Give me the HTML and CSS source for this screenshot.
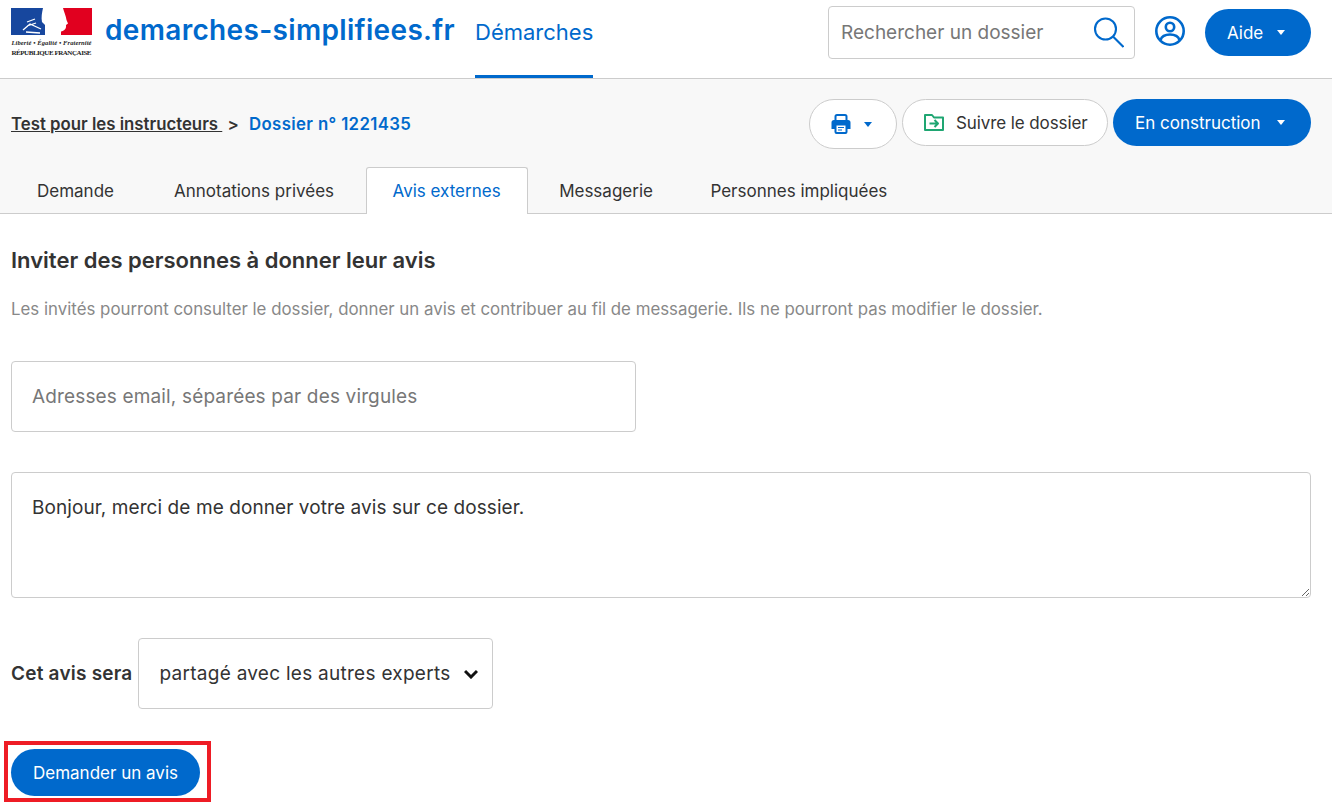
FILE: index.html
```html
<!DOCTYPE html>
<html lang="fr">
<head>
<meta charset="utf-8">
<title>Avis externes</title>
<link rel="stylesheet" href="styles.css">
</head>
<body>
<header class="topbar">
  <div class="brand">
    <svg class="logo" width="82" height="50" viewBox="0 0 82 50">
      <rect x="0" y="0" width="34" height="27" fill="#17479e"/>
      <rect x="50" y="0" width="31" height="27" fill="#e1001f"/>
      <path d="M32 0 H52 C53 4 55 8 55.500 12 L57 15.500 L55 17 C55.500 21 53 23 50 23.500 L47 27 H42 C40 22 36 19 31 14 C30 9 31 5 32 0 Z" fill="#fff"/>
      <path d="M16 14 L24 11 M12 22 L19 16 L30 21 M15 24 L29 25 M16 18 L25 15" stroke="#fff" stroke-width="1.3" fill="none"/>
      <text x="0.5" y="37" class="motto" textLength="80">Liberté • Égalité • Fraternité</text>
      <text x="0.5" y="47" class="rf" textLength="80">RÉPUBLIQUE FRANÇAISE</text>
    </svg>
    <span class="site-name">demarches-simplifiees.fr</span>
  </div>
  <nav class="mainnav"><a class="mainnav-link">Démarches</a></nav>
  <div class="top-actions">
    <div class="search">
      <span class="search-text">Rechercher un dossier</span>
      <svg width="31" height="31" viewBox="0 0 31 31" fill="none" stroke="#0069cc" stroke-width="2.1"><circle cx="12.500" cy="12" r="10.500"/><path d="M20 19.500 L30.500 30"/></svg>
    </div>
    <svg class="user" width="32" height="32" viewBox="0 0 32 32" fill="none" stroke="#0069cc" stroke-width="2.6"><circle cx="16" cy="16" r="13.7"/><circle cx="16" cy="12" r="4.2"/><path d="M6.5 25 C8 20.5 11 19.5 16 19.5 C21 19.5 24 20.5 25.5 25"/></svg>
    <button class="btn btn-primary btn-help">Aide<span class="caret caret-white"></span></button>
  </div>
</header>

<section class="subheader">
  <div class="crumbrow">
    <div class="crumbs">
      <a class="crumb-link">Test pour les instructeurs </a>
      <span class="crumb-sep">&gt;</span>
      <span class="crumb-current">Dossier n° 1221435</span>
    </div>
    <div class="dossier-actions">
      <button class="btn btn-outline btn-print">
        <svg width="20" height="20" viewBox="0 0 20 20"><rect x="4.500" y="1" width="11" height="6.500" rx="1.500" fill="none" stroke="#0069cc" stroke-width="2"/><path d="M3 6 H17 A2.500 2.500 0 0 1 19.500 8.500 V15 H0.500 V8.500 A2.500 2.500 0 0 1 3 6 Z" fill="#0069cc"/><rect x="4.500" y="10.500" width="11" height="8.500" rx="1" fill="#fff" stroke="#0069cc" stroke-width="2"/><path d="M7 13.500 H13 M7 16 H11" stroke="#0069cc" stroke-width="1.200"/></svg>
        <span class="caret caret-blue"></span>
      </button>
      <button class="btn btn-outline btn-follow">
        <svg width="20" height="17" viewBox="0 0 20 17" fill="none" stroke="#1fa672" stroke-width="2" stroke-linejoin="round"><path d="M1 16 V1 H8 L10 3.500 H19 V16 Z"/><path d="M5.500 9.500 H14 M10.500 6 L14 9.500 L10.500 13"/></svg>
        <span>Suivre le dossier</span>
      </button>
      <button class="btn btn-primary btn-state">En construction<span class="caret caret-white"></span></button>
    </div>
  </div>
  <nav class="tabs">
    <a class="tab">Demande</a>
    <a class="tab">Annotations privées</a>
    <a class="tab tab-active">Avis externes</a>
    <a class="tab">Messagerie</a>
    <a class="tab">Personnes impliquées</a>
  </nav>
</section>

<main class="content">
  <h1 class="title">Inviter des personnes à donner leur avis</h1>
  <p class="notice">Les invités pourront consulter le dossier, donner un avis et contribuer au fil de messagerie. Ils ne pourront pas modifier le dossier.</p>
  <input class="field email" type="text" placeholder="Adresses email, séparées par des virgules">
  <textarea class="field message">Bonjour, merci de me donner votre avis sur ce dossier.</textarea>
  <div class="share-row">
    <label class="share-label">Cet avis sera</label>
    <div class="field share-select">
      <span>partagé avec les autres experts</span>
      <svg width="14" height="10" viewBox="0 0 14 10" fill="none" stroke="#111" stroke-width="3"><path d="M1 2 L7 8 L13 2"/></svg>
    </div>
  </div>
  <div class="submit-row">
    <button class="btn btn-primary btn-submit">Demander un avis</button>
    <div class="highlight"></div>
  </div>
</main>
</body>
</html>
```

FILE: styles.css
```css
* { box-sizing: border-box; }
html, body { height: 100%; }
body {
  margin: 0;
  overflow: hidden;
  background: #fff;
  color: #333;
  font-family: "Inter", "Liberation Sans", sans-serif;
  font-size: 17px;
}

/* Top bar */
.topbar {
  display: flex;
  height: 79px;
  padding: 0 21px 0 11px;
  border-bottom: 1px solid #ccc;
}
.brand { display: flex; align-items: flex-start; width: 444px; flex: none; }
.logo { margin-top: 8px; flex: none; }
.motto { font-family: "Liberation Serif", serif; font-style: italic; font-weight: 700; font-size: 6.500px; fill: #222; }
.rf { font-family: "Liberation Serif", serif; font-size: 7px; font-weight: 700; fill: #222; }
.site-name {
  margin: 10px 0 0 12px;
  color: #0069cc;
  font-size: 28px;
  font-weight: 600;
  letter-spacing: 0.33px;
  line-height: 40px;
  white-space: nowrap;
}
.mainnav { margin-left: 20px; }
.mainnav-link {
  display: block;
  height: 78px;
  padding-top: 18px;
  border-bottom: 3px solid #0069cc;
  color: #0069cc;
  font-size: 22px;
  line-height: 28px;
  width: 118px;
}
.top-actions { display: flex; align-items: flex-start; margin-left: auto; }
.search {
  display: flex;
  align-items: center;
  justify-content: space-between;
  width: 307px;
  height: 53px;
  margin-top: 6px;
  padding: 0 10px 0 12px;
  border: 1px solid #ccc;
  border-radius: 4px;
  color: #777;
  font-size: 19px;
}
.user { margin: 15px 0 0 19px; }
.btn {
  display: inline-flex;
  align-items: center;
  border-radius: 30px;
  font-family: inherit;
  font-size: 17px;
  cursor: pointer;
}
.btn-primary { border: 0; background: #0069cc; color: #fff; }
.btn-outline { border: 1px solid #ccc; background: #fff; color: #333; }
.btn-help {
  width: 106px;
  height: 47px;
  margin: 9px 0 0 19px;
  padding: 0 0 0 22px;
}
.caret {
  width: 0;
  height: 0;
  border-left: 4px solid transparent;
  border-right: 4px solid transparent;
  border-top: 5px solid currentColor;
}
.caret-white { margin-left: 14px; color: #fff; }
.btn-state .caret-white { margin-left: 16px; }
.caret-blue { margin-left: 13px; color: #0069cc; }

/* Sub header */
.subheader {
  height: 135px;
  padding: 0 21px 0 11px;
  background: #f8f8f8;
  border-bottom: 1px solid #ccc;
}
.crumbrow {
  display: flex;
  align-items: flex-start;
  justify-content: space-between;
  height: 88px;
  padding-top: 20px;
}
.crumbs { margin-top: 13px; font-size: 16.800px; font-weight: 600; line-height: 24px; }
.crumb-link { color: #333; text-decoration: underline; white-space: pre; }
.crumb-sep { margin: 0 6px 0 1px; }
.crumb-current { color: #0069cc; letter-spacing: 0.36px; }
.dossier-actions { display: flex; align-items: flex-start; gap: 5px; }
.btn-print {
  width: 88px;
  height: 50px;
  padding: 0 0 0 21px;
}
.btn-follow {
  gap: 12px;
  width: 206px;
  height: 47px;
  padding: 0 0 0 21px;
  letter-spacing: -0.1px;
}
.btn-state {
  width: 198px;
  height: 47px;
  padding: 0 0 0 22px;
}
.tabs { display: flex; gap: 5.500px; height: 47px; }
.tab {
  display: block;
  height: 47px;
  padding: 0 26px;
  color: #333;
  line-height: 49px;
  white-space: nowrap;
}
.tab:first-child { margin-right: 2.500px; }
.tab-active {
  border: 1px solid #ccc;
  border-bottom: 0;
  border-radius: 3px 3px 0 0;
  background: #fff;
  color: #0069cc;
  margin-bottom: -1px;
  line-height: 46px;
}

/* Content */
.content { padding: 0 21px 0 11px; }
.title {
  margin: 31px 0 0;
  font-size: 22px;
  font-weight: 600;
  line-height: 30px;
}
.notice {
  margin: 22px 0 0;
  color: #888;
  font-size: 16.850px;
  line-height: 24px;
}
.field {
  display: block;
  border: 1px solid #ccc;
  border-radius: 4px;
  background: #fff;
  color: #333;
  font-family: inherit;
  font-size: 19px;
}
.field::placeholder { color: #777; opacity: 1; }
.email {
  width: 625px;
  height: 71px;
  margin-top: 40px;
  padding: 0 20px;
  letter-spacing: 0.15px;
}
.message {
  width: 1300px;
  height: 126px;
  margin-top: 40px;
  padding: 21px 20px;
  letter-spacing: 0.08px;
  line-height: 28px;
  resize: both;
}
.share-row { display: flex; align-items: center; margin-top: 40px; gap: 6px; }
.share-label { font-size: 19px; font-weight: 600; letter-spacing: 0.22px; white-space: nowrap; }
.share-select {
  display: flex;
  align-items: center;
  justify-content: space-between;
  width: 355px;
  height: 71px;
  padding: 0 14px 0 20px;
  letter-spacing: 0.27px;
}
.submit-row { position: relative; margin-top: 40px; width: 189px; }
.btn-submit {
  width: 189px;
  height: 47px;
  justify-content: center;
}
.highlight {
  position: absolute;
  left: -7px;
  right: -11px;
  top: -8px;
  height: 61px;
  border: 4px solid #ee1c25;
  pointer-events: none;
}
```
